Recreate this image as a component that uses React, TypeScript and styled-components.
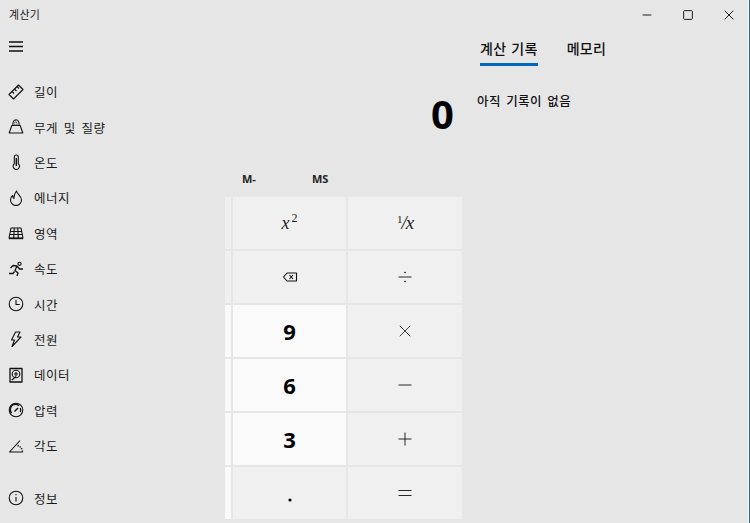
import React from 'react';
import styled, { createGlobalStyle } from 'styled-components';

const GlobalStyle = createGlobalStyle`
	html, body {
		margin: 0;
		padding: 0;
		background: #e6e6e6;
	}
	body {
		font-family: "Noto Sans CJK KR", "Noto Sans", sans-serif;
		color: #111;
		overflow: hidden;
	}
`;

const Window = styled.div`
	width: 750px;
	height: 523px;
	box-sizing: border-box;
	background: #e6e6e6;
	border-right: 1px solid #2b7391;
	box-shadow: inset -1px 0 0 #f2f2f2;
	display: flex;
	flex-direction: column;
`;

const TitleBar = styled.header`
	height: 29px;
	flex: none;
	display: flex;
	align-items: center;
	justify-content: space-between;
	padding-left: 9px;
	font-size: 11px;
	letter-spacing: 0.3px;
	color: #222;
	span {
		margin-top: -2px;
	}
`;

const WindowButtons = styled.div`
	display: flex;
`;

const WindowButton = styled.div`
	width: 41px;
	height: 29px;
	display: flex;
	align-items: center;
	justify-content: center;
`;

const Body = styled.div`
	flex: 1;
	display: flex;
	min-height: 0;
`;

const Sidebar = styled.nav`
	width: 225px;
	flex: none;
	display: flex;
	flex-direction: column;
	padding: 10px 0 0 8px;
	box-sizing: border-box;
`;

const Hamburger = styled.div`
	height: 35px;
	flex: none;
	display: flex;
	align-items: flex-start;
`;

const NavList = styled.div`
	display: flex;
	flex-direction: column;
`;

const NavRow = styled.div<{ $gap?: number }>`
	height: 35.4px;
	margin-top: ${(p) => p.$gap ?? 0}px;
	display: flex;
	align-items: center;
	gap: 10px;
	font-size: 12.5px;
	letter-spacing: 0.5px;
	word-spacing: 2.5px;
	color: #1a1a1a;
	svg {
		flex: none;
	}
`;

const CalcColumn = styled.main`
	width: 238px;
	flex: none;
	display: flex;
	flex-direction: column;
`;

const Display = styled.div`
	height: 116px;
	flex: none;
	box-sizing: border-box;
	padding: 50px 9px 0 0;
	text-align: right;
	font-family: "Noto Sans", sans-serif;
	font-size: 40px;
	line-height: 70px;
	font-weight: 700;
	color: #000;
`;

const MemoryRow = styled.div`
	height: 52px;
	flex: none;
	display: flex;
	padding: 25px 0 0 17px;
	box-sizing: border-box;
`;

const MemoryKey = styled.span`
	width: 70px;
	font-family: "Noto Sans", sans-serif;
	font-size: 11px;
	line-height: 18px;
	font-weight: 700;
	color: #222;
`;

const Keypad = styled.div`
	display: grid;
	grid-template-columns: 6px 113px 114px;
	grid-auto-rows: 52px;
	gap: 2px;
`;

const Key = styled.div<{ $light?: boolean; $digit?: boolean }>`
	background: ${(p) => (p.$light ? '#fafafa' : '#f0f0f0')};
	display: flex;
	align-items: center;
	justify-content: center;
	font-family: "Noto Sans", sans-serif;
	font-size: ${(p) => (p.$digit ? '22px' : '14px')};
	font-weight: ${(p) => (p.$digit ? 700 : 400)};
	color: #000;
`;

const Strip = styled.div<{ $light?: boolean }>`
	background: ${(p) => (p.$light ? '#fafafa' : '#f0f0f0')};
`;

const MathKey = styled.span`
	font-family: "Liberation Serif", serif;
	font-style: italic;
	font-size: 18px;
	color: #222;
	sup {
		font-style: normal;
		font-size: 12px;
		margin-left: 2px;
		line-height: 0;
		vertical-align: 7px;
	}
`;

const Fraction = styled.span`
	font-family: "Liberation Serif", serif;
	font-size: 19px;
	font-style: italic;
	color: #222;
	letter-spacing: -1px;
	small {
		font-style: normal;
		font-size: 11px;
		vertical-align: 6px;
		line-height: 0;
	}
`;

const HistoryColumn = styled.aside`
	flex: 1;
	display: flex;
	flex-direction: column;
	padding-left: 14px;
`;

const Tabs = styled.div`
	display: flex;
	gap: 29px;
	padding-left: 3px;
`;

const Tab = styled.div<{ $active?: boolean }>`
	height: 37px;
	box-sizing: border-box;
	border-bottom: 3px solid ${(p) => (p.$active ? '#0067c0' : 'transparent')};
	font-size: 14px;
	line-height: 20px;
	padding-top: 9px;
	font-weight: 500;
	letter-spacing: 0.3px;
	word-spacing: 1.5px;
	color: #111;
`;

const EmptyNote = styled.p`
	margin: 26px 0 0;
	font-size: 12.5px;
	line-height: 18px;
	font-weight: 500;
	letter-spacing: 0.45px;
	word-spacing: 2px;
	color: #111;
`;

const IconSvg = styled.svg`
	display: block;
`;

const Icon: React.FC<{ size?: number; weight?: number; children: React.ReactNode }> = ({
	size = 16,
	weight = 1.1,
	children,
}) => (
	<IconSvg
		width={size}
		height={size}
		viewBox="0 0 16 16"
		fill="none"
		stroke="#111"
		strokeWidth={weight}
		strokeLinejoin="round"
	>
		{children}
	</IconSvg>
);

const navItems: { label: string; icon: React.ReactNode }[] = [
	{
		label: '길이',
		icon: (
			<>
				<path d="M1 10.5 10.5 1 15 5.5 5.5 15z" />
				<path d="M4 7.5l2 2M6.5 5l2 2M9 2.5l2 2" />
			</>
		),
	},
	{
		label: '무게 및 질량',
		icon: (
			<>
				<path d="M3.8 6.5 1.2 14h13.6l-2.6-7.5z" />
				<path d="M4.8 6.5C4.8 2.8 6.2.7 8 .7s3.2 2.1 3.2 5.8" />
				<path d="M6 5.2h4M6.4 3.4h3.2M7 1.9h2" strokeWidth="0.8" strokeDasharray="1 0.7" />
			</>
		),
	},
	{
		label: '온도',
		icon: (
			<>
				<path d="M6.3 9.8V3a2 2 0 0 1 4 0v6.8a3.2 3.2 0 1 1-4 0z" />
				<path d="M8.3 4v8" strokeWidth="1.4" />
			</>
		),
	},
	{
		label: '에너지',
		icon: <path d="M8.5 1c.3 3 5 4.8 5 9a5.5 5.5 0 0 1-11 0c0-2 1-3.5 2.2-4.5.1 1.5.5 2.3 1.3 3C5.8 6 6.8 3 8.5 1z" />,
	},
	{
		label: '영역',
		icon: (
			<>
				<path d="M3 3h10l2 10H1z" />
				<path d="M2.6 6.5h10.8M1.8 9.5h12.4M6.3 3 5.7 13M9.7 3l.6 10" />
				<path d="M1 13.5h14" strokeWidth="1.4" />
			</>
		),
	},
	{
		label: '속도',
		icon: (
			<>
				<circle cx="11.5" cy="2.8" r="1.6" />
				<path d="M2.5 7 5 4.5l4 .5 2.5 3H15M9 5 7 9.5l3 2.5-1 3M6.5 10.5 5 12.5H1" strokeWidth="1.3" />
			</>
		),
	},
	{
		label: '시간',
		icon: (
			<>
				<circle cx="8" cy="8" r="6.8" />
				<path d="M8 3.8V8.5h3.8" />
			</>
		),
	},
	{
		label: '전원',
		icon: <path d="M7.5 1H12L9.500 6H13L4 15.500 6.500 9H3.500z" />,
	},
	{
		label: '데이터',
		icon: (
			<>
				<rect x="2" y="1.5" width="12" height="13.5" strokeWidth="1.3" />
				<circle cx="8" cy="7" r="3.8" />
				<circle cx="8" cy="7" r="1.1" />
				<path d="M3.8 13 8 9.5" strokeWidth="1.3" />
			</>
		),
	},
	{
		label: '압력',
		icon: (
			<>
				<circle cx="8" cy="8" r="6.8" />
				<path d="M3.8 11A5 5 0 0 1 11 3.8M12.3 6a5 5 0 0 1 0 4" strokeWidth="1.4" />
				<path d="M6.5 9.5l3.5-3.5" strokeWidth="1.5" />
			</>
		),
	},
	{
		label: '각도',
		icon: (
			<>
				<path d="M15 14H1.5L12 2.5" />
				<path d="M9.5 7.5c3 1 4.500 3 5 6" strokeDasharray="1.2 1.2" strokeWidth="1.5" />
			</>
		),
	},
];

const keyRows: { left: React.ReactNode; right: React.ReactNode; light?: boolean; digit?: boolean; strip?: boolean }[] = [
	{
		left: (
			<MathKey>
				x<sup>2</sup>
			</MathKey>
		),
		right: (
			<Fraction>
				<small>1</small>/x
			</Fraction>
		),
	},
	{
		left: (
			<Icon>
				<path d="M1.5 8 5 4h9.5v8H5z" />
				<path d="M7.5 6l3.5 4M11 6l-3.5 4" />
			</Icon>
		),
		right: (
			<Icon weight={0.9}>
				<path d="M1.5 8h13" />
				<circle cx="8" cy="3.5" r=".5" />
				<circle cx="8" cy="12.5" r=".5" />
			</Icon>
		),
	},
	{
		left: '9',
		light: true,
		strip: true,
		digit: true,
		right: (
			<Icon size={14} weight={0.9}>
				<path d="M2 2l12 12M14 2 2 14" />
			</Icon>
		),
	},
	{
		left: '6',
		light: true,
		strip: true,
		digit: true,
		right: (
			<Icon weight={0.9}>
				<path d="M1.5 8h13" />
			</Icon>
		),
	},
	{
		left: '3',
		light: true,
		strip: true,
		digit: true,
		right: (
			<Icon weight={0.9}>
				<path d="M1.5 8h13M8 1.5v13" />
			</Icon>
		),
	},
	{
		left: (
			<svg width="16" height="20" viewBox="0 0 16 20">
				<circle cx="8" cy="17" r="1.6" fill="#000" />
			</svg>
		),
		digit: true,
		strip: true,
		right: (
			<Icon weight={0.9}>
				<path d="M1.5 5.5h13M1.5 10.5h13" />
			</Icon>
		),
	},
];

function App() {
	return (
		<>
			<GlobalStyle />
			<Window>
				<TitleBar>
					<span>계산기</span>
					<WindowButtons>
						<WindowButton>
							<Icon size={10} weight={1.5}>
								<path d="M1 8h14" />
							</Icon>
						</WindowButton>
						<WindowButton>
							<Icon size={10} weight={1.5}>
								<rect x="1" y="1" width="14" height="14" rx="1.5" />
							</Icon>
						</WindowButton>
						<WindowButton>
							<Icon size={10} weight={1.5}>
								<path d="M1 1l14 14M15 1 1 15" />
							</Icon>
						</WindowButton>
					</WindowButtons>
				</TitleBar>
				<Body>
					<Sidebar>
						<Hamburger>
							<Icon weight={1.3}>
								<path d="M1 3h14M1 7.5h14M1 12h14" />
							</Icon>
						</Hamburger>
						<NavList>
							{navItems.map((item) => (
								<NavRow key={item.label}>
									<Icon>{item.icon}</Icon>
									{item.label}
								</NavRow>
							))}
							<NavRow $gap={17.5}>
								<Icon>
									<circle cx="8" cy="8" r="6.8" />
									<path d="M8 7v4.5M8 4v1.2" />
								</Icon>
								정보
							</NavRow>
						</NavList>
					</Sidebar>
					<CalcColumn>
						<Display>0</Display>
						<MemoryRow>
							<MemoryKey>M-</MemoryKey>
							<MemoryKey>MS</MemoryKey>
						</MemoryRow>
						<Keypad>
							{keyRows.map((row, i) => (
								<React.Fragment key={i}>
									<Strip $light={row.strip} />
									<Key $light={row.light} $digit={row.digit}>
										{row.left}
									</Key>
									<Key>{row.right}</Key>
								</React.Fragment>
							))}
						</Keypad>
					</CalcColumn>
					<HistoryColumn>
						<Tabs>
							<Tab $active>계산 기록</Tab>
							<Tab>메모리</Tab>
						</Tabs>
						<EmptyNote>아직 기록이 없음</EmptyNote>
					</HistoryColumn>
				</Body>
			</Window>
		</>
	);
}

export default App;
